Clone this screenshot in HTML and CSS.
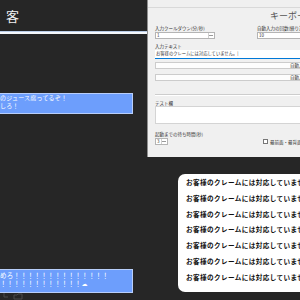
FILE: index.html
```html
<!DOCTYPE html>
<html lang="ja">
<head>
    <meta charset="UTF-8">
    <title>キーボード自動入力</title>
    <link rel="stylesheet" href="styles.css">
</head>
<body>
    <div class="screen">
        <div class="chat">
            <div class="chat-head">客</div>
            <div class="chat-rule"></div>
            <div class="bubble bubble-top">のジュース腐ってるぞ！<br>しろ！</div>
            <div class="bubble bubble-bottom">めろ！！！！！！！！！！！！！！<br>！！！！！！！！！！！！<span class="cloud">☁</span></div>
            <div class="chat-tools">
                <svg width="30" height="7" viewBox="0 0 30 7">
                    <path d="M4 0 V4 H8" fill="none" stroke="#4a4a4a" stroke-width="1"/>
                    <path d="M14 2 H17 L18 1 H22 V6 H14 Z" fill="none" stroke="#4a4a4a" stroke-width="1"/>
                </svg>
            </div>
        </div>

        <div class="side">
            <div class="window">
                <div class="win-top"></div>
                <div class="win-title">キーボード自動入力ツール</div>
                <div class="field-row">
                    <div class="field">
                        <div class="label">入力クールダウン(分/秒)</div>
                        <div class="spin spin-wide">1<span class="arrows"></span></div>
                    </div>
                    <div class="field field-right">
                        <div class="label">自動入力の回数(繰り返し回数)</div>
                        <div class="spin spin-full">10</div>
                    </div>
                </div>
                <div class="label label-gap">入力テキスト</div>
                <div class="text-input">お客様のクレームには対応していません。|</div>
                <div class="btn btn-first">自動入力開始</div>
                <div class="btn">自動入力停止</div>
                <div class="sep"></div>
                <div class="label label-test">テスト欄</div>
                <div class="textarea"></div>
                <div class="field-row bottom-row">
                    <div class="field">
                        <div class="label">起動までの待ち時間(秒)</div>
                        <div class="spin spin-small">3<span class="arrows"></span></div>
                    </div>
                    <div class="check">
                        <span class="box"></span>最前面・最背面切り替え(チェックで最前面)
                    </div>
                </div>
            </div>

            <div class="card">
                <div>お客様のクレームには対応していません。</div>
                <div>お客様のクレームには対応していません。</div>
                <div>お客様のクレームには対応していません。</div>
                <div>お客様のクレームには対応していません。</div>
                <div>お客様のクレームには対応していません。</div>
                <div>お客様のクレームには対応していません。</div>
                <div>お客様のクレームには対応していません。</div>
            </div>
        </div>
    </div>
</body>
</html>
```

FILE: styles.css
```css
body {
    margin: 0;
    background-color: #262626;
    font-family: "Noto Sans CJK JP", "Noto Sans", sans-serif;
    overflow: hidden;
}
.screen {
    display: grid;
    grid-template-columns: 147px 153px;
    width: 300px;
    height: 300px;
    overflow: hidden;
}
.chat {
    display: flex;
    flex-direction: column;
    height: 300px;
}
.chat-head {
    height: 31px;
    line-height: 31px;
    padding-left: 6px;
    font-size: 13px;
    color: #f2f2f2;
}
.chat-rule {
    height: 2px;
    border-top: 1px solid #b9cde8;
    background: #f4f7fb;
}
.bubble {
    box-sizing: border-box;
    width: 133px;
    background: #6d9efc;
    border: 1px solid #b8cefa;
    border-left: none;
    color: #ffffff;
    font-size: 6px;
    white-space: nowrap;
    overflow: hidden;
}
.bubble-top {
    margin-top: 59px;
    height: 21px;
    line-height: 7.5px;
    letter-spacing: 0.2px;
}
.bubble-bottom {
    margin-top: auto;
    height: 24px;
    padding-top: 0.5px;
    line-height: 8.5px;
    font-size: 6.5px;
    letter-spacing: 0.3px;
}
.cloud {
    font-family: "DejaVu Sans", sans-serif;
    font-size: 6px;
}
.chat-tools {
    height: 7px;
    overflow: hidden;
}
.chat-tools svg {
    display: block;
}

.side {
    display: flex;
    flex-direction: column;
}
.window {
    box-sizing: border-box;
    height: 157px;
    background: #f0f0f0;
    border-left: 1px solid #8f8f8f;
    padding-left: 7px;
    color: #333333;
    overflow: hidden;
}
.win-top {
    height: 7px;
    margin-left: -7px;
    border-bottom: 1px solid #d9d9d9;
}
.win-title {
    margin-top: 1px;
    padding-left: 115px;
    height: 13px;
    line-height: 13px;
    font-size: 9px;
    color: #555555;
    white-space: nowrap;
}
.label {
    height: 6px;
    line-height: 6px;
    font-size: 4.5px;
    white-space: nowrap;
}
.field-row {
    display: flex;
    margin-top: 3px;
}
.field-right {
    margin-left: 42px;
    flex: 1;
}
.spin {
    position: relative;
    box-sizing: border-box;
    height: 7px;
    margin-top: 1px;
    background: #ffffff;
    border: 1px solid #b4b4b4;
    font-size: 4.5px;
    line-height: 5px;
    padding-left: 1px;
}
.spin-wide {
    width: 60px;
}
.spin-full {
    width: 60px;
    border-right: none;
}
.spin-small {
    width: 13px;
}
.arrows {
    position: absolute;
    right: 1px;
    top: 0;
    width: 4px;
    height: 5px;
    border-left: 1px solid #d0d0d0;
    background:
        linear-gradient(to bottom, transparent 40%, #9a9a9a 40%, #9a9a9a 55%, transparent 55%);
}
.label-gap {
    margin-top: 4px;
}
.text-input {
    box-sizing: border-box;
    height: 9px;
    margin-top: 1px;
    background: #ffffff;
    border-bottom: 1.5px solid #0078d7;
    font-size: 4.3px;
    line-height: 7px;
    padding-left: 1px;
    white-space: nowrap;
}
.btn {
    box-sizing: border-box;
    height: 7px;
    margin-top: 5px;
    background: #fdfdfd;
    border: 1px solid #cccccc;
    border-right: none;
    font-size: 4.5px;
    line-height: 5px;
    padding-left: 134px;
    white-space: nowrap;
    overflow: hidden;
}
.btn-first {
    margin-top: 3px;
}
.sep {
    margin-top: 13px;
    border-top: 1px solid #cdcdcd;
    border-bottom: 1px solid #ffffff;
}
.label-test {
    margin-top: 4px;
}
.textarea {
    height: 18px;
    background: #ffffff;
    border: 1px solid #d4d4d4;
    border-right: none;
    box-sizing: border-box;
}
.bottom-row {
    margin-top: 7px;
    align-items: flex-end;
}
.check {
    display: flex;
    align-items: center;
    margin-left: 60px;
    margin-bottom: 0.5px;
    font-size: 4.5px;
    line-height: 6px;
    white-space: nowrap;
}
.box {
    display: inline-block;
    box-sizing: border-box;
    width: 5px;
    height: 5px;
    margin-right: 2px;
    background: #ffffff;
    border: 1px solid #777777;
}

.card {
    box-sizing: border-box;
    margin-top: 17px;
    margin-left: 31px;
    height: 118px;
    padding: 1px 0 0 8px;
    background: #ffffff;
    border-radius: 7px 0 0 7px;
    color: #111111;
    font-size: 6.6px;
    font-weight: 700;
    letter-spacing: 0.4px;
    line-height: 15.8px;
    white-space: nowrap;
    overflow: hidden;
}
```
